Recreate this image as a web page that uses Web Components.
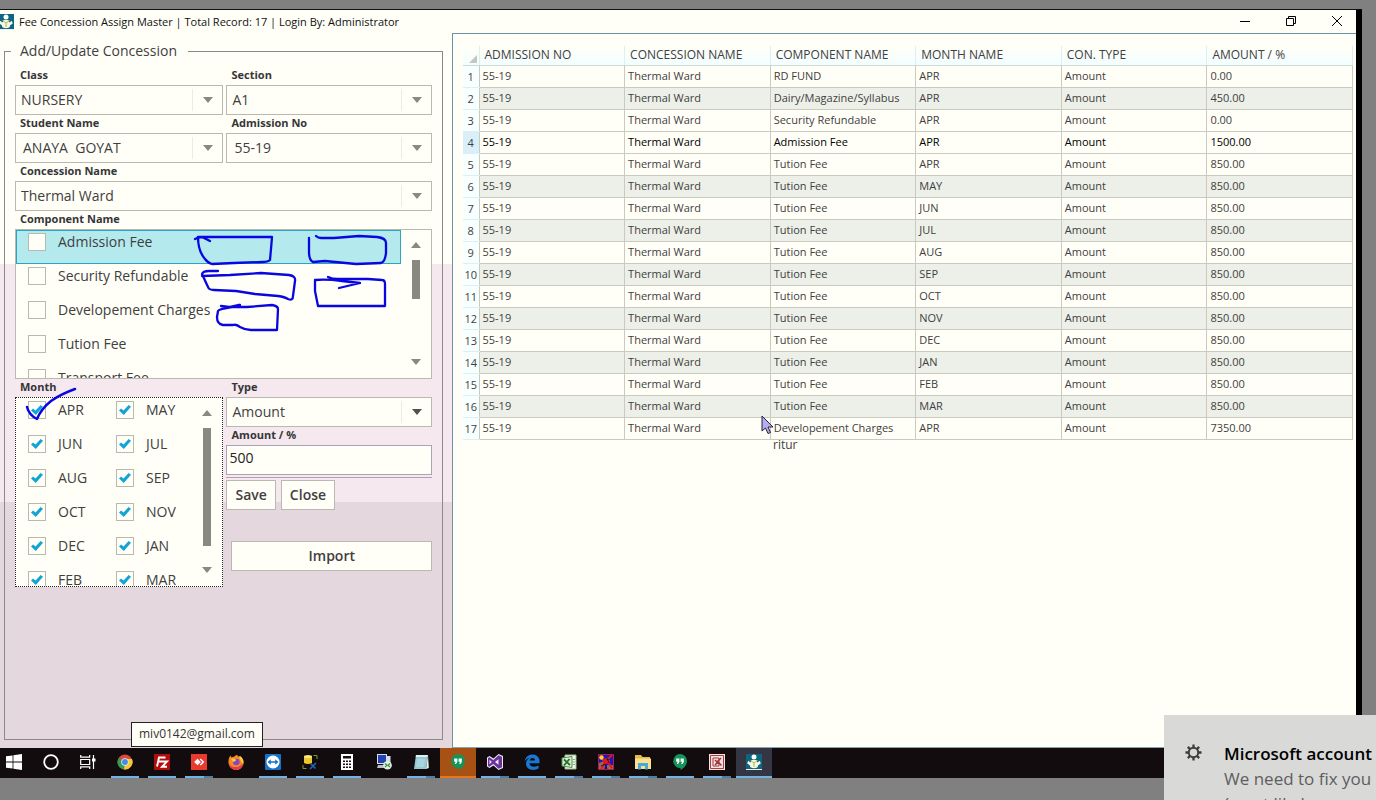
<!DOCTYPE html>
<html lang="en">
<head>
<meta charset="utf-8">
<title>Fee Concession Assign Master</title>
<style>
  :root {
    --paper: #fffff8;
    --line: #b9b9b1;
    --text: #3f403e;
    --accent: #11a5d6;
  }
  * { box-sizing: border-box; }
  html, body { height: 100%; }
  body {
    margin: 0;
    background: #808080;
    color: var(--text);
    font: 11px/16px "Open Sans", "Noto Sans", sans-serif;
    overflow: hidden;
  }
</style>
</head>
<body>
<desk-screen>
  <app-window>
    <title-bar slot="title">Fee Concession Assign Master | Total Record: 17 | Login By: Administrator</title-bar>
    <concession-form slot="side"></concession-form>
    <fee-grid></fee-grid>
  </app-window>
  <task-bar slot="bar"></task-bar>
</desk-screen>
<toast-note heading="Microsoft account">We need to fix you<br>(most likely</toast-note>

<script>
const base = /*css*/ `*{box-sizing:border-box}`;

class BaseElement extends HTMLElement {
  connectedCallback() {
    if (this.shadowRoot) return;
    this.attachShadow({ mode: "open" });
    this.shadowRoot.innerHTML = `<style>${base}${this.css()}</style>${this.html()}`;
  }
  css() { return ""; }
  html() { return "<slot></slot>"; }
}

// <desk-screen> - the desktop area: window on top, taskbar under it
class DeskScreen extends BaseElement {
  css() {
    return /*css*/ `
      :host{display:flex;flex-direction:column;height:100vh;padding:9px 14px 22px 0}
      .main{flex:1;min-height:0;display:flex;border-top:1px solid #111;border-right:6px solid #000}
      ::slotted(app-window){flex:1;min-width:0}
    `;
  }
  html() { return `<div class="main"><slot></slot></div><slot name="bar"></slot>`; }
}
customElements.define("desk-screen", DeskScreen);

// <app-window> - title, side panel and content
class AppWindow extends BaseElement {
  css() {
    return /*css*/ `
      :host{display:flex;flex-direction:column;overflow:hidden;
        background:linear-gradient(var(--paper) 254px,#f5e8ee 254px,#f5e8ee 492px,#e4d8de 492px)}
      .body{flex:1;min-height:0;display:grid;grid-template-columns:minmax(0,1fr) minmax(0,2fr)}
    `;
  }
  html() {
    return `<slot name="title"></slot><div class="body"><slot name="side"></slot><slot></slot></div>`;
  }
}
customElements.define("app-window", AppWindow);

const appIcon = /*html*/ `
  <rect width="16" height="16" fill="#0f6480"/>
  <circle cx="8" cy="3" r="2.500" fill="#fff"/>
  <path d="M5.500 6h5l1 2.500 2.300-1.700 1 2.700-2.600 1.700c0 2-1.500 3-4.200 3s-4.200-1-4.200-3L1.200 9.500l1-2.700 2.300 1.700z" fill="#f6f7e6"/>
  <path d="M4.500 6.500L8 9l3.500-2.500M8 9v4" stroke="#a8bf3a" fill="none"/>
  <path d="M0 15.500h16" stroke="#e8f1f1"/>`;

class TitleBar extends BaseElement {
  css() {
    return /*css*/ `
      :host{display:flex;align-items:center;height:23px;background:var(--paper);color:#111;margin-right:-4px}
      .icon{width:16px;height:16px;margin-left:-2px;flex:none}
      .name{flex:1;padding-left:5px;white-space:nowrap}
      button{width:46px;height:23px;border:0;padding:0 0 2px;background:none;display:grid;place-items:center}
      button svg{width:12px;height:12px;fill:none;stroke:#000}
    `;
  }
  html() {
    return /*html*/ `
      <svg class="icon" viewBox="0 0 16 16">${appIcon}</svg>
      <span class="name"><slot></slot></span>
      <button aria-label="Minimize"><svg viewBox="0 0 12 12"><path d="M1 6.500h10"/></svg></button>
      <button aria-label="Restore"><svg viewBox="0 0 12 12"><path d="M1.500 3.500h7v7h-7zM3.500 3.500v-2h7v7h-2"/></svg></button>
      <button aria-label="Close"><svg viewBox="0 0 12 12"><path d="M1 1l10 10M11 1L1 11"/></svg></button>
    `;
  }
}
customElements.define("title-bar", TitleBar);

const labelCss = /*css*/ `
  .label{display:block;height:18px;line-height:16px;padding-left:5px;font-weight:700;color:#353638}
`;

// <fee-select label value> - labelled drop-down
class FeeSelect extends BaseElement {
  css() {
    return /*css*/ `
      :host{display:block}
      ${labelCss}
      .box{position:relative;height:30px}
      .box::before{content:"";position:absolute;right:30px;top:4px;bottom:4px;border-left:1px solid #ecece6}
      .box::after{content:"";position:absolute;right:10px;top:12px;border:5px solid transparent;
        border-top:6px solid var(--arrow,#888a82);border-bottom:0;pointer-events:none}
      select{appearance:none;width:100%;height:30px;margin:0;padding:0 32px 0 var(--inset,5px);
        border:1px solid var(--line);border-radius:0;background:var(--paper);color:var(--text);
        font:14px/28px "Open Sans","Noto Sans",sans-serif}
    `;
  }
  html() {
    const value = this.getAttribute("value");
    return /*html*/ `
      <label class="label" for="s">${this.getAttribute("label")}</label>
      <div class="box"><select id="s"><option>${value}</option></select></div>
    `;
  }
}
customElements.define("fee-select", FeeSelect);

// <fee-input label value>
class FeeInput extends BaseElement {
  css() {
    return /*css*/ `
      :host{display:block}
      ${labelCss}
      input{display:block;width:100%;height:30px;margin:0;padding:0 2px 6px;border:1px solid #aaa3b3;border-radius:0;
        background:var(--paper);color:#222;font:14px/20px "Open Sans","Noto Sans",sans-serif}
    `;
  }
  html() {
    return /*html*/ `
      <label class="label" for="i">${this.getAttribute("label")}</label>
      <input id="i" type="text" value="${this.getAttribute("value")}">
    `;
  }
}
customElements.define("fee-input", FeeInput);

// <check-item checked selected>Text</check-item>
class CheckItem extends BaseElement {
  css() {
    return /*css*/ `
      :host{display:block;height:34px;border:1px solid transparent}
      :host([selected]){background:#b4e9ed;border-color:#28a5c0}
      label{display:flex;gap:12px;padding:2px 0 0 11px;font-size:14px;line-height:18px;white-space:nowrap}
      input{appearance:none;flex:none;width:18px;height:18px;margin:0;border:1px solid var(--line);background:var(--paper);
        display:grid;place-items:center}
      input:checked::before{content:"";width:12px;height:10px;background:var(--accent);
        clip-path:polygon(0 56%,17% 34%,38% 56%,80% 0,100% 18%,40% 100%)}
    `;
  }
  html() {
    const on = this.hasAttribute("checked") ? "checked" : "";
    return `<label><input type="checkbox" ${on}><span><slot></slot></span></label>`;
  }
}
customElements.define("check-item", CheckItem);

// <check-list label> - scrolling list, --thumb sets the scroll thumb height
class CheckList extends BaseElement {
  css() {
    return /*css*/ `
      :host{display:block}
      ${labelCss}
      .box{display:flex;height:var(--height);border:1px var(--edge,solid) var(--edge-color,var(--line));
        background:var(--paper);overflow:hidden}
      .items{flex:1;display:grid;grid-template-columns:var(--cols,1fr);align-content:start}
      .bar{width:30px;display:flex;flex-direction:column;align-items:center;padding:12px 0 13px}
      .up,.down{border:5px solid transparent;flex:none}
      .up{border-bottom:6px solid #888a82;border-top:0;margin-bottom:12px}
      .down{border-top:6px solid #888a82;border-bottom:0;margin-top:auto}
      .thumb{width:8px;height:var(--thumb);background:#888a82}
    `;
  }
  html() {
    const label = this.getAttribute("label");
    return /*html*/ `
      <span class="label" id="l">${label}</span>
      <div class="box" role="group" aria-labelledby="l">
        <div class="items"><slot></slot></div>
        <div class="bar"><i class="up"></i><i class="thumb"></i><i class="down"></i></div>
      </div>
    `;
  }
}
customElements.define("check-list", CheckList);

// <pen-marks> - freehand strokes lying over the form
class PenMarks extends BaseElement {
  css() {
    return /*css*/ `
      :host{position:absolute;left:0;top:0;pointer-events:none}
      svg{display:block;width:440px;height:400px;fill:none;stroke:#0a06e0;stroke-width:2.300;
        stroke-linecap:round;stroke-linejoin:round}
    `;
  }
  html() {
    // user space starts at the panel's corner, 33px below the screen top
    return /*html*/ `
      <svg viewBox="0 33 440 400">
        <path d="M195 239q4-2 7-2l8 4M199 237h73l-1 12-1 11q-2 2-8 2l-28 1-22 1q-4-1-7-5-7-8-7-22"/>
        <path d="M309 238v14q0 8 4 10l12-1 31 3 25-1q4-1 5-10V243q0-5-9-6l-18-1-25 2h-13q-3 0-5-2"/>
        <path d="M218 271h-9q-6 0-7 3l6 13q1 3 6 3l22 1 19 3 23 2q7 1 10 3 5 2 5-3l2-15q1-5-6-6l-28-2-31 2-28 1"/>
        <path d="M328 277q4 2 10 2h30l14 1q3 0 3 4v22h-67l-3-15v-11q12-1 27 1l18 2-21 5"/>
        <path d="M221 306l8 1 9-2 2 0M221 306l8 1h18l25-2q6 1 6 4l-1 21-26 0q-6 0-11-3-4-3-7-2h-10q-6-1-6-8l1-6q1-2 14-4"/>
        <path d="M27 407q2 8 10 12 4-10 14-18 10-7 24-12" stroke-width="2.500"/>
      </svg>
    `;
  }
}
customElements.define("pen-marks", PenMarks);

class ConcessionForm extends BaseElement {
  css() {
    return /*css*/ `
      :host{display:flex;position:relative;padding:7px 9px 8px 4px}
      fieldset{flex:1;min-width:0;margin:0;padding:5px 10px 0;border:1px solid #8b8a88}
      legend{margin-left:-4px;padding:0 11px 0 9px;font-size:14px;line-height:22px}
      .grid{display:grid;grid-template-columns:209fr 206fr;column-gap:3px}
      .wide{grid-column:1/-1}
      .picked{--inset:7px}
      .components{--height:150px;--thumb:39px}
      .months{--height:190px;--thumb:118px;--cols:88px 1fr;--edge:dotted;--edge-color:#222}
      hr{margin:2px 0;border:0;border-top:1px solid #b3a0b4}
      .dark{--arrow:#50524c}
      button{height:30px;padding:0 8px;border:1px solid var(--line);background:var(--paper);color:var(--text);
        font:600 14px/26px "Open Sans","Noto Sans",sans-serif}
      .actions{display:flex;gap:5px}
      .import{display:block;width:calc(100% - 5px);margin:31px 0 0 5px}
    `;
  }
  html() {
    const months = ["APR", "MAY", "JUN", "JUL", "AUG", "SEP", "OCT", "NOV", "DEC", "JAN", "FEB", "MAR"];
    return /*html*/ `
      <fieldset>
        <legend>Add/Update Concession</legend>
        <div class="grid">
          <fee-select label="Class" value="NURSERY"></fee-select>
          <fee-select label="Section" value="A1"></fee-select>
          <fee-select class="picked" label="Student Name" value="ANAYA&nbsp; GOYAT"></fee-select>
          <fee-select class="picked" label="Admission No" value="55-19"></fee-select>
          <fee-select class="wide" label="Concession Name" value="Thermal Ward"></fee-select>
          <check-list class="wide components" label="Component Name">
            <check-item selected>Admission Fee</check-item>
            <check-item>Security Refundable</check-item>
            <check-item>Developement Charges</check-item>
            <check-item>Tution Fee</check-item>
            <check-item>Transport Fee</check-item>
          </check-list>
          <check-list class="months" label="Month">
            ${months.map((m) => `<check-item checked>${m}</check-item>`).join("")}
          </check-list>
          <div class="side">
            <fee-select class="dark" label="Type" value="Amount"></fee-select>
            <fee-input label="Amount / %" value="500"></fee-input>
            <hr>
            <div class="actions"><button>Save</button><button>Close</button></div>
            <button class="import">Import</button>
          </div>
        </div>
      </fieldset>
      <pen-marks></pen-marks>
    `;
  }
}
customElements.define("concession-form", ConcessionForm);

const rows = [
  ["RD FUND", "APR", "0.00"],
  ["Dairy/Magazine/Syllabus", "APR", "450.00"],
  ["Security Refundable", "APR", "0.00"],
  ["Admission Fee", "APR", "1500.00"],
  ...["APR", "MAY", "JUN", "JUL", "AUG", "SEP", "OCT", "NOV", "DEC", "JAN", "FEB", "MAR"]
    .map((m) => ["Tution Fee", m, "850.00"]),
  ["Developement Charges", "APR", "7350.00"],
];

class FeeGrid extends BaseElement {
  css() {
    return /*css*/ `
      :host{display:block;position:relative;background:var(--paper);border-top:1px solid #6b93a6;
        border-left:1px solid #6b93a6;border-bottom:1px solid #8aa5ad;padding:12px 3px 0 10px}
      table{width:100%;border-collapse:collapse;table-layout:fixed}
      col.no{width:16px}
      thead th{height:19px;padding:1px 0 1px 5px;text-align:left;font-size:12px;font-weight:400;line-height:16px;
        white-space:nowrap;background:linear-gradient(#fffff8,#f2feff);
        border-right:1px solid #e0eef0;border-bottom:1px solid #ccd9d4}
      thead th:first-child{vertical-align:bottom;padding:0 2px 2px 0}
      .corner{display:block;width:0;margin-left:auto;border:4px solid #c6c6c0;
        border-top-color:transparent;border-left-color:transparent}
      td{height:22px;padding:0 0 0 3px;line-height:16px;white-space:nowrap;border:1px solid #c9cbc0}
      tbody th{padding:2px 0 0;text-align:center;font-weight:400;line-height:16px;background:#f8ffff;
        border-top:1px solid #dceff2;border-bottom:1px solid #dceff2}
      tr:nth-child(even) td{background:#edf0e8}
      tbody tr.current td{background:var(--paper);color:#000;font-weight:500}
      tr.current th{background:#d9f0fb}
      .rest{margin:-3px 0 0 310px;font-size:12px;line-height:16px}
      .pointer{position:absolute;left:308px;top:381px;width:13px;height:20px}
    `;
  }
  html() {
    const heads = ["ADMISSION NO", "CONCESSION NAME", "COMPONENT NAME", "MONTH NAME", "CON. TYPE", "AMOUNT / %"];
    const body = rows.map(([name, month, amount], i) => /*html*/ `
      <tr class="${i === 3 ? "current" : ""}"><th scope="row">${i + 1}</th><td>55-19</td><td>Thermal Ward</td>
      <td>${name}</td><td>${month}</td><td>Amount</td><td>${amount}</td></tr>`).join("");
    return /*html*/ `
      <table>
        <colgroup><col class="no"><col span="6"></colgroup>
        <thead><tr><th><i class="corner"></i></th>${heads.map((h) => `<th scope="col">${h}</th>`).join("")}</tr></thead>
        <tbody>${body}</tbody>
      </table>
      <div class="rest">ritur</div>
      <svg class="pointer" viewBox="0 0 13 20">
        <path d="M1 1v15l3.500-3 2.500 5.500 2.500-1-2.500-5.500H12z" fill="#b4adf0" stroke="#25233c"/>
      </svg>
    `;
  }
}
customElements.define("fee-grid", FeeGrid);

// name, state, 16x16 drawing
const hangouts = `<path d="M8 0a7 7 0 0 1 7 7c0 4-3 7-6.500 9v-2A7 7 0 0 1 8 0z" fill="#12955a"/><path d="M4.200 4.500h3.200v3.500L6 10H4.800L5.700 7.700H4.200zM8.600 4.500h3.200v3.500L10.400 10H9.200l.9-2.300H8.600z" fill="#fff"/>`;
const tasks = [
  ["Start", "", `<path d="M0 2.300L6.600 1.400v6.200H0zM7.400 1.300L16 0v7.600H7.400zM0 8.400h6.600v6.200L0 13.700zM7.400 8.400H16V16l-8.600-1.300z" fill="#fff"/>`],
  ["Search", "", `<circle cx="8" cy="8" r="6.800" fill="none" stroke="#fff" stroke-width="1.800"/>`],
  ["Task view", "", `<path d="M.7 1v2.200h9V1M.7 5.500h9v5h-9zM.7 15v-2.200h9V15M13.500 1v14" fill="none" stroke="#fff" stroke-width="1.200"/><path d="M12 4.500h3.500v3H12z" fill="#fff"/>`],
  ["Chrome", "run", `<circle cx="8" cy="8" r="7.500" fill="#d94a38"/><path d="M8 8L1.500 4.200A7.500 7.500 0 0 0 7 15.400z" fill="#2f9d58"/><path d="M8 8L7 15.400A7.500 7.500 0 0 0 15 5H8z" fill="#f3ca35"/><circle cx="8" cy="8" r="3.700" fill="#e9edf0"/><circle cx="8" cy="8" r="2.900" fill="#4688e8"/>`],
  ["FileZilla", "run", `<path d="M0 0h16v16H0z" fill="#b10d0d"/><path d="M3 12.500L5 3.500h6.500M4.500 7.500h4M8.500 7.500h4.500L8 12.800h5" fill="none" stroke="#fff" stroke-width="1.900"/>`],
  ["AnyDesk", "run multi", `<path d="M0 0h16v16H0z" fill="#e93c2f"/><path d="M6.500 4.700L9.800 8 6.500 11.300 3.200 8z" fill="#fff"/><path d="M9.300 5L12.300 8l-3 3" fill="none" stroke="#fff" stroke-width="1.500"/>`],
  ["Firefox", "", `<path d="M8 1c1-.3 2 .7 3 2l1-1c3 2 4 5 3.500 8A7.600 7.600 0 0 1 .5 9C.3 6 1 3 2.500 1.500l1 2C5 3 7 2.500 8 1z" fill="#f58a22"/><path d="M.5 8c1 3 3 5 7 5 4 0 6-2 7.800-4.500C14.500 14 11 16 8 16S1 13.500.5 8z" fill="#e9394e"/><circle cx="8.300" cy="8" r="3.300" fill="#8349c4"/><path d="M3 5c3-1 5 0 5 1.500L5.500 8z" fill="#ffc938"/><path d="M11 3l1-1c3 2 4 5 3 8l-2-3z" fill="#ffce3a"/>`],
  ["TeamViewer", "run", `<rect width="16" height="16" rx="1" fill="#1673c8"/><circle cx="8" cy="8" r="6.500" fill="#fff"/><path d="M2.500 8l3.300-2.700v1.900h4.400V5.300L13.500 8l-3.300 2.700V8.800H5.800v1.900z" fill="#1673c8"/>`],
  ["SQL tools", "run", `<path d="M2 2.500h8V9q-4 2-8 0z" fill="#edc62c"/><ellipse cx="6" cy="2.500" rx="4" ry="1.500" fill="#fae785"/><path d="M11.500 1.500H15v3.500M4.500 14.500H1V11" fill="none" stroke="#6aa33c"/><path d="M8.500 9.500l5 5M14 9l-6 6" stroke="#1c68ac" stroke-width="1.700"/>`],
  ["Calculator", "run", `<path d="M2 0h12v16H2z" fill="#fff"/><path d="M4 2h8v2.500H4zM4 6.500h2v1.500H4zM7 6.500h2v1.500H7zM10 6.500h2v1.500h-2zM4 9.500h2V11H4zM7 9.500h2V11H7zM10 9.500h2V11h-2zM4 12.500h2V14H4zM7 12.500h2V14H7zM10 12.500h2V14h-2z" fill="#1a1014"/>`],
  ["Remote Desktop", "", `<path d="M1 0h10v10H1z" fill="#d9dee9"/><path d="M2 1h8v8H2z" fill="#2343b5"/><path d="M2 11h7l1 3H1z" fill="#b9beca"/><path d="M11 2h3.500v8H11z" fill="#d9dee9"/><circle cx="11.500" cy="11.300" r="4.300" fill="#e5ede1"/><path d="M9 9.500l2 1.700-2 1.800M14 9.500l-2 1.700 2 1.800" fill="none" stroke="#349447" stroke-width="1.200"/>`],
  ["Notepad", "run multi", `<path d="M3 1h12l-2 14H1z" fill="#93c9d5"/><path d="M3 1h12l-1 2H2.700z" fill="#e4edf0"/><path d="M4 6h8M3.700 8h8M3.400 10h8M3 12h8" stroke="#bfe0e6"/><path d="M13 15l2-14 .8 13z" fill="#e9eeee"/>`],
  ["Hangouts", "alert", hangouts],
  ["Visual Studio", "run multi", `<path d="M11.500 0L16 2v12l-4.500 2L6.500 11.500 2.500 14 0 12.500v-9L2.500 2l4 2.500z" fill="#f1e9f8"/><path d="M11.500 1.200L15 2.700v10.600l-3.500 1.500L6.400 10l-4 2.700L1 12V4l1.400-.7 4 2.700zM11.500 5.200L8 8l3.500 2.800zM2.500 5.800v4.400L4.800 8z" fill="#68349c" fill-rule="evenodd"/>`],
  ["Edge", "run", `<path d="M.5 7.500C1.500 3 4.500.5 8.500.5c4.500 0 7 3 7 6.500v2.200H5.500c.2 4 5.200 4.400 9 2.200v3.200c-5 2.600-12.500 1.400-12.500-5C2 6.500 4.500 4.200 7 3.600 4 4 1.800 5.500.5 7.500zM5.700 6.400h5.400C11.100 3.100 6.300 3 5.700 6.400z" fill="#1879d4"/>`],
  ["Excel", "run multi", `<path d="M4 1h11v14H4z" fill="#f1f7ea" stroke="#9cbd8c"/><path d="M1 4l10-1.500v11L1 12z" fill="#dcebd0" stroke="#4c8f4a"/><path d="M3 5.500l6 5.500M8.500 5L3 11.500" stroke="#26702e" stroke-width="1.800"/><path d="M12 5.500h2M12 8h2M12 10.500h2" stroke="#80ae78"/>`],
  ["Paint", "run multi", `<path d="M0 0h16v16H0z" fill="#1516d0"/><path d="M1 9l5-2 2 3-2 5H1zM9 11h6v4H9z" fill="#8d6a68"/><path d="M3 15l4-5 3-2 4 6M7 10L5 6l6-2 3-3M6 7h6" stroke="#e01919" stroke-width="2" fill="none"/><circle cx="3.500" cy="3.500" r="2.200" fill="#f7d92e"/><path d="M3 12l4-2 2 5M9 4l2 5" stroke="#1a1030" fill="none"/><path d="M.5.5h15v15H.5z" fill="none" stroke="#c21a2c"/>`],
  ["File Explorer", "run multi", `<path d="M0 1h6l1.500 2H15v11H0z" fill="#e7b94b"/><path d="M0 4.500h16V15H0z" fill="#fae18e"/><path d="M3 15.500V9h10v6.500h-3V12H6v3.500z" fill="#49a9df"/>`],
  ["Hangouts", "run", hangouts],
  ["Editor", "run multi", `<path d="M0 0h16v16H0z" fill="#f5e1df"/><path d="M1.500 1.500h13v13h-13z" fill="none" stroke="#ad3e40"/><path d="M4 4h6v8H4z" fill="none" stroke="#9a3d40"/><path d="M6 6l2 2 4-4M6 11l3-3 3.500 3.500" fill="none" stroke="#a32e34" stroke-width="1.500"/>`],
  ["Fee Concession", "active", appIcon],
];

class TaskBar extends BaseElement {
  css() {
    return /*css*/ `
      :host{display:flex;gap:1px;position:relative;height:30px;background:#120c0f}
      button{flex:none;width:36px;height:30px;padding:0;border:0;background:none;display:grid;
        grid-template-rows:28px 2px;justify-items:center;align-items:center}
      button:first-of-type{margin-left:-4px}
      svg{width:16px;height:16px}
      i{width:28px;height:2px}
      .run i{background:#72b2e4}
      .multi i{background:linear-gradient(90deg,#72b2e4 19px,#4e7da3 19px)}
      .alert{background:#a85114}
      .alert i{width:36px;background:#e8761c}
      .active{background:#343743}
      .active i{width:36px;background:#72b2e4}
      .tip{position:absolute;left:131px;bottom:31px;padding:2px 7px 4px;border:1px solid #222;
        background:var(--paper);color:#333;font-size:12px;line-height:17px}
    `;
  }
  html() {
    const buttons = tasks.map(([name, state, art]) =>
      `<button class="${state}" aria-label="${name}"><svg viewBox="0 0 16 16">${art}</svg><i></i></button>`).join("");
    return `${buttons}<div class="tip">miv0142@gmail.com</div>`;
  }
}
customElements.define("task-bar", TaskBar);

class ToastNote extends BaseElement {
  css() {
    return /*css*/ `
      :host{position:fixed;right:0;bottom:0;display:flex;gap:22px;width:212px;height:85px;padding:26px 0 0 21px;
        background:#d9d9d8;overflow:hidden;white-space:nowrap}
      svg{flex:none;width:17px;height:17px;margin-top:3px}
      .text{font-size:17px;line-height:25px;color:#5e5e5e}
      strong{display:block;font-weight:600;color:#000}
    `;
  }
  html() {
    return /*html*/ `
      <svg viewBox="0 0 18 18" fill="none" stroke="#3b3b3b">
        <circle cx="9" cy="9" r="5" stroke-width="2"/>
        <path d="M14 9h3.500M.5 9H4M9 .5V4M9 14v3.500M12.500 5.500L15 3M3 15l2.500-2.500M5.500 5.500L3 3M12.500 12.500L15 15" stroke-width="2.400"/>
      </svg>
      <div class="text"><strong>${this.getAttribute("heading")}</strong><slot></slot></div>
    `;
  }
}
customElements.define("toast-note", ToastNote);
</script>
</body>
</html>
